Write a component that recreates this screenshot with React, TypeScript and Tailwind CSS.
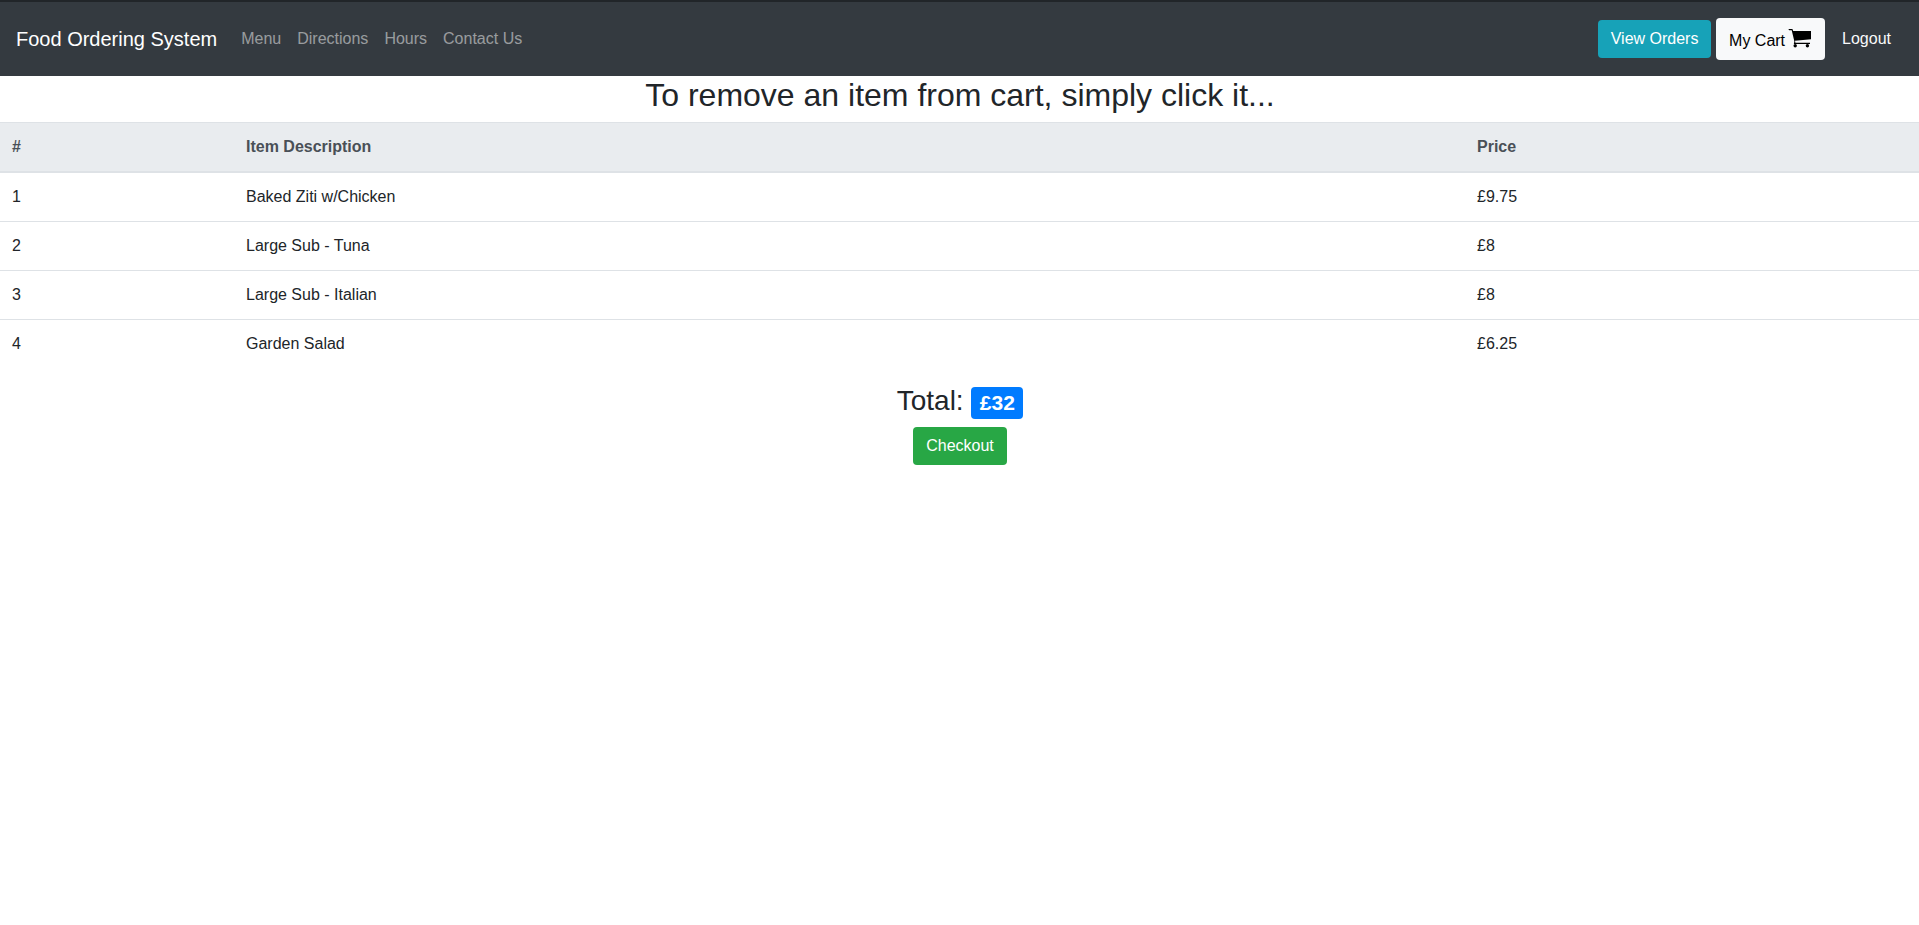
const navLinks = ['Menu', 'Directions', 'Hours', 'Contact Us'];

const items = [
  { name: 'Baked Ziti w/Chicken', price: '£9.75' },
  { name: 'Large Sub - Tuna', price: '£8' },
  { name: 'Large Sub - Italian', price: '£8' },
  { name: 'Garden Salad', price: '£6.25' },
];

function CartIcon() {
  return (
    <svg className="mt-[-5px] ml-[2.6px] h-5 w-6 shrink-0" viewBox="0 0 24 20" fill="currentColor" aria-hidden="true">
      <path d="M.3 1H4.4L5.2 3H23V11.2L7 12.7 7.4 14.7H22V16H5.8L6.4 13.4 3.7 2.2H1.2Z" />
      <circle cx="7.2" cy="17.8" r="1.7" />
      <circle cx="19.4" cy="17.8" r="1.7" />
    </svg>
  );
}

function Navbar() {
  return (
    <nav className="flex h-[76px] items-center border-t-2 border-[#212529] bg-[#343a40] px-4">
      <a className="mr-4 text-[20px] leading-[30px] text-white">Food Ordering System</a>
      <ul className="flex grow">
        {navLinks.map((link) => (
          <li key={link} className="px-2 py-2 text-white/50">{link}</li>
        ))}
      </ul>
      <div className="flex items-center">
        <button className="mr-[5px] h-[38px] w-[113px] rounded bg-[#17a2b8] whitespace-nowrap text-white">View Orders</button>
        <button className="mr-[5px] flex h-[42px] w-[109px] items-center rounded bg-[#f8f9fa] pt-[3px] pl-[13px] whitespace-nowrap text-black">
          My Cart
          <CartIcon />
        </button>
        <button className="h-[38px] px-[12px] text-[#f8f9fa]">Logout</button>
      </div>
    </nav>
  );
}

export default function App() {
  return (
    <div className="min-h-screen bg-white font-['Liberation_Sans',Arial,sans-serif] text-base leading-6 text-[#212529]">
      <Navbar />
      <main className="text-center">
        <h2 className="mb-2 pl-px text-[32px] leading-[38.4px] font-medium">To remove an item from cart, simply click it...</h2>
        <table className="mb-4 w-full table-fixed border-separate border-spacing-0 text-left">
          <colgroup>
            <col className="w-[234px]" />
            <col className="w-[1231px]" />
            <col />
          </colgroup>
          <thead>
            <tr className="text-[#495057]">
              <th className="border-t border-b-2 border-[#dee2e6] bg-[#e9ecef] p-3 font-bold">#</th>
              <th className="border-t border-b-2 border-[#dee2e6] bg-[#e9ecef] p-3 font-bold">Item Description</th>
              <th className="border-t border-b-2 border-[#dee2e6] bg-[#e9ecef] p-3 font-bold">Price</th>
            </tr>
          </thead>
          <tbody className="[&>tr+tr>td]:border-t">
            {items.map((item, index) => (
              <tr key={item.name}>
                <td className="border-[#dee2e6] p-3">{index + 1}</td>
                <td className="border-[#dee2e6] p-3">{item.name}</td>
                <td className="border-[#dee2e6] p-3">{item.price}</td>
              </tr>
            ))}
          </tbody>
        </table>
        <h3 className="mb-2 pl-px text-[28px] leading-[33.6px] font-medium">
          Total:{' '}
          <span className="inline-block rounded bg-[#007bff] px-[.4em] py-[.25em] align-baseline text-[21px] leading-none font-bold text-white">
            £32
          </span>
        </h3>
        <div className="flex justify-center pl-px">
          <button className="h-[38px] rounded bg-[#28a745] px-[13px] text-white">Checkout</button>
        </div>
      </main>
    </div>
  );
}
